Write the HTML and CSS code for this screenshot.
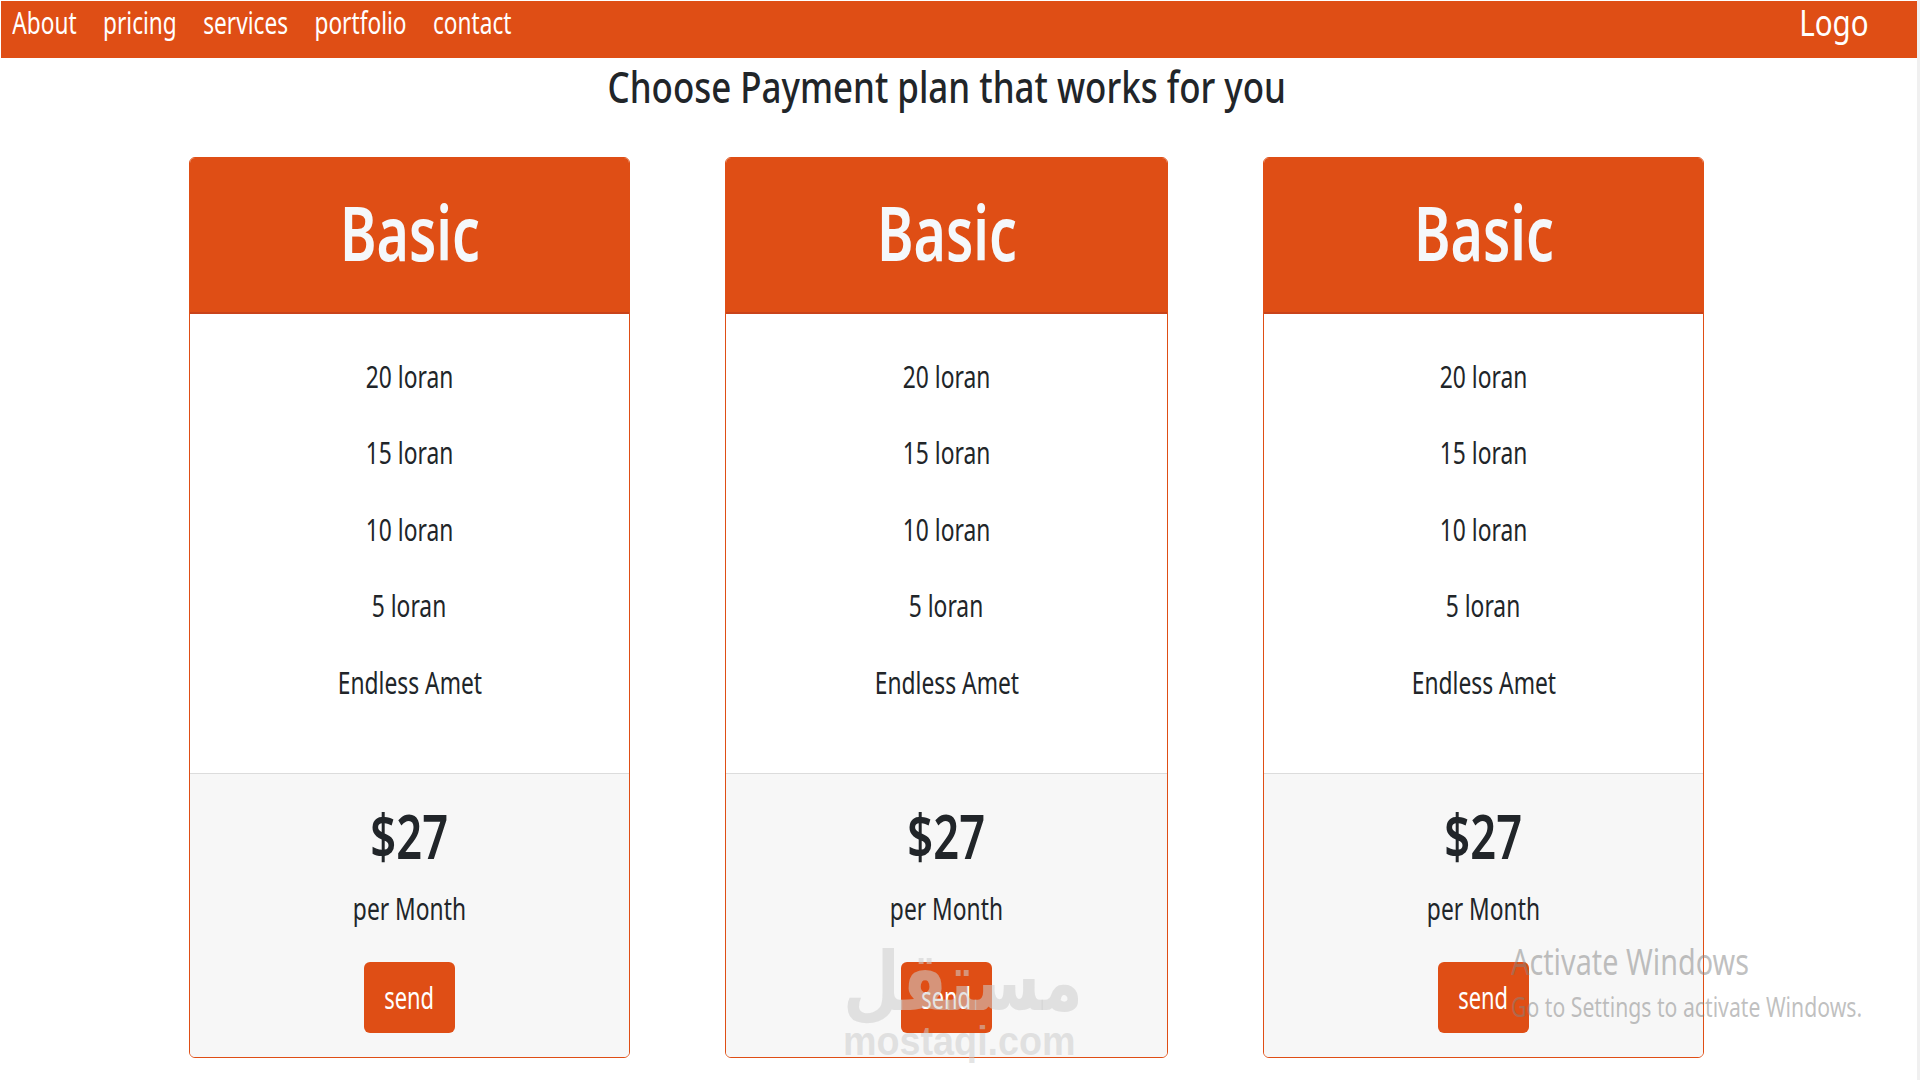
FILE: index.html
```html
<!DOCTYPE html>
<html lang="en">
<head>
    <meta charset="UTF-8">
    <title>Pricing</title>
    <link rel="stylesheet" href="styles.css">
</head>
<body>
    <nav class="navbar">
        <ul class="nav-links">
            <li>About</li>
            <li>pricing</li>
            <li>services</li>
            <li>portfolio</li>
            <li>contact</li>
        </ul>
        <span class="logo">Logo</span>
    </nav>

    <h1 class="title"><span class="sq">Choose Payment plan that works for you</span></h1>

    <div class="plans">
        <div class="card">
            <div class="card-head"><span class="sq">Basic</span></div>
            <ul class="card-list">
                <li><span class="sq">20 loran</span></li>
                <li><span class="sq">15 loran</span></li>
                <li><span class="sq">10 loran</span></li>
                <li><span class="sq">5 loran</span></li>
                <li><span class="sq">Endless Amet</span></li>
            </ul>
            <div class="card-foot">
                <div class="price"><span class="sq">$27</span></div>
                <div class="per"><span class="sq">per Month</span></div>
                <button class="send" type="button"><span class="sq">send</span></button>
            </div>
        </div>
        <div class="card">
            <div class="card-head"><span class="sq">Basic</span></div>
            <ul class="card-list">
                <li><span class="sq">20 loran</span></li>
                <li><span class="sq">15 loran</span></li>
                <li><span class="sq">10 loran</span></li>
                <li><span class="sq">5 loran</span></li>
                <li><span class="sq">Endless Amet</span></li>
            </ul>
            <div class="card-foot">
                <div class="price"><span class="sq">$27</span></div>
                <div class="per"><span class="sq">per Month</span></div>
                <button class="send" type="button"><span class="sq">send</span></button>
            </div>
        </div>
        <div class="card">
            <div class="card-head"><span class="sq">Basic</span></div>
            <ul class="card-list">
                <li><span class="sq">20 loran</span></li>
                <li><span class="sq">15 loran</span></li>
                <li><span class="sq">10 loran</span></li>
                <li><span class="sq">5 loran</span></li>
                <li><span class="sq">Endless Amet</span></li>
            </ul>
            <div class="card-foot">
                <div class="price"><span class="sq">$27</span></div>
                <div class="per"><span class="sq">per Month</span></div>
                <button class="send" type="button"><span class="sq">send</span></button>
            </div>
        </div>
    </div>

    <div class="watermark">
        <div class="wm-ar">مستقل</div>
        <div class="wm-en">mostaqi.com</div>
    </div>

    <div class="activate">
        <div class="activate-big">Activate Windows</div>
        <div class="activate-small">Go to Settings to activate Windows.</div>
    </div>
</body>
</html>
```

FILE: styles.css
```css
* {
    box-sizing: border-box;
    font-family: "Noto Sans", "Open Sans", sans-serif;
}
html, body {
    margin: 0;
    height: 1080px;
    overflow: hidden;
}
body {
    position: relative;
    background-color: #fff;
    color: #212529;
    border-right: 3px solid #f0f0f0;
}
.sq {
    display: inline-block;
    white-space: nowrap;
    transform: scaleX(0.73);
}

/* navbar */
.navbar {
    display: flex;
    justify-content: space-between;
    margin: 1px 0 0 1px;
    height: 57px;
    background-color: #df4e15;
    color: #fff;
}
.nav-links {
    display: flex;
    gap: 35px;
    margin: 0;
    padding: 0 0 0 15px;
    list-style: none;
    font-size: 30px;
    line-height: 44px;
    transform: scaleX(0.755);
    transform-origin: left;
    height: 44px;
}
.logo {
    font-size: 36px;
    line-height: 44px;
    margin-right: 48px;
    transform: scaleX(0.82);
    transform-origin: right;
}

/* heading */
.title {
    margin: 0;
    height: 99px;
    text-align: center;
    font-size: 44px;
    font-weight: 500;
    line-height: 56px;
    padding-right: 23px;
}
.title .sq {
    transform: scaleX(0.793);
}

/* cards */
.plans {
    display: flex;
    gap: 95px;
    padding-left: 189px;
}
.card {
    width: 441px;
    height: 901px;
    display: flex;
    flex-direction: column;
    border: 1px solid #df4e15;
    border-radius: 6px;
    overflow: hidden;
    text-align: center;
}
.card:nth-child(2) {
    width: 443px;
}
.card-head {
    height: 157px;
    background-color: #df4e15;
    border-bottom: 2px solid #c9431a;
    color: #f5f8fb;
    font-size: 76px;
    font-weight: 600;
    line-height: 150px;
    margin: -1px -1px 0;
}
.card-head .sq {
    transform: scaleX(0.73);
}
.card-list {
    flex: 1;
    margin: 0;
    padding: 43px 0 0;
    list-style: none;
    font-size: 30px;
    line-height: 40px;
}
.card-list li {
    height: 76.4px;
}
.card-list .sq {
    transform: scaleX(0.76);
}
.card-foot {
    height: 284px;
    background-color: #f7f7f7;
    border-top: 1px solid #dcdcdc;
}
.price {
    font-size: 62px;
    font-weight: 600;
    line-height: 80px;
    margin-top: 21px;
}
.per {
    font-size: 30px;
    line-height: 40px;
    margin-top: 14px;
}
.per .sq {
    transform: scaleX(0.76);
}
.send {
    display: block;
    width: 91px;
    height: 71px;
    margin: 33px auto 0;
    padding: 0;
    border: none;
    border-radius: 6px;
    background-color: #df4e15;
    color: #fff;
    font-size: 30px;
}

/* overlays */
.watermark {
    position: absolute;
    left: 843px;
    top: 940px;
    width: 230px;
    color: rgba(205, 205, 205, 0.55);
    pointer-events: none;
    white-space: nowrap;
}
.wm-ar {
    font-family: "DejaVu Sans", sans-serif;
    font-weight: bold;
    font-size: 82px;
    line-height: 84px;
    transform: scaleX(0.8);
    transform-origin: left;
    width: 288px;
    text-align: center;
}
.wm-en {
    font-family: "Liberation Sans", sans-serif;
    font-weight: bold;
    font-size: 41px;
    line-height: 34px;
    transform: scaleX(0.92);
    transform-origin: left;
}
.activate {
    position: absolute;
    left: 1511px;
    top: 938px;
    color: rgba(130, 130, 130, 0.5);
    pointer-events: none;
    white-space: nowrap;
    transform: scaleX(0.8);
    transform-origin: left;
}
.activate-big {
    font-size: 36px;
    line-height: 48px;
}
.activate-small {
    font-size: 26.5px;
    line-height: 40px;
    margin-top: 1px;
}
```
